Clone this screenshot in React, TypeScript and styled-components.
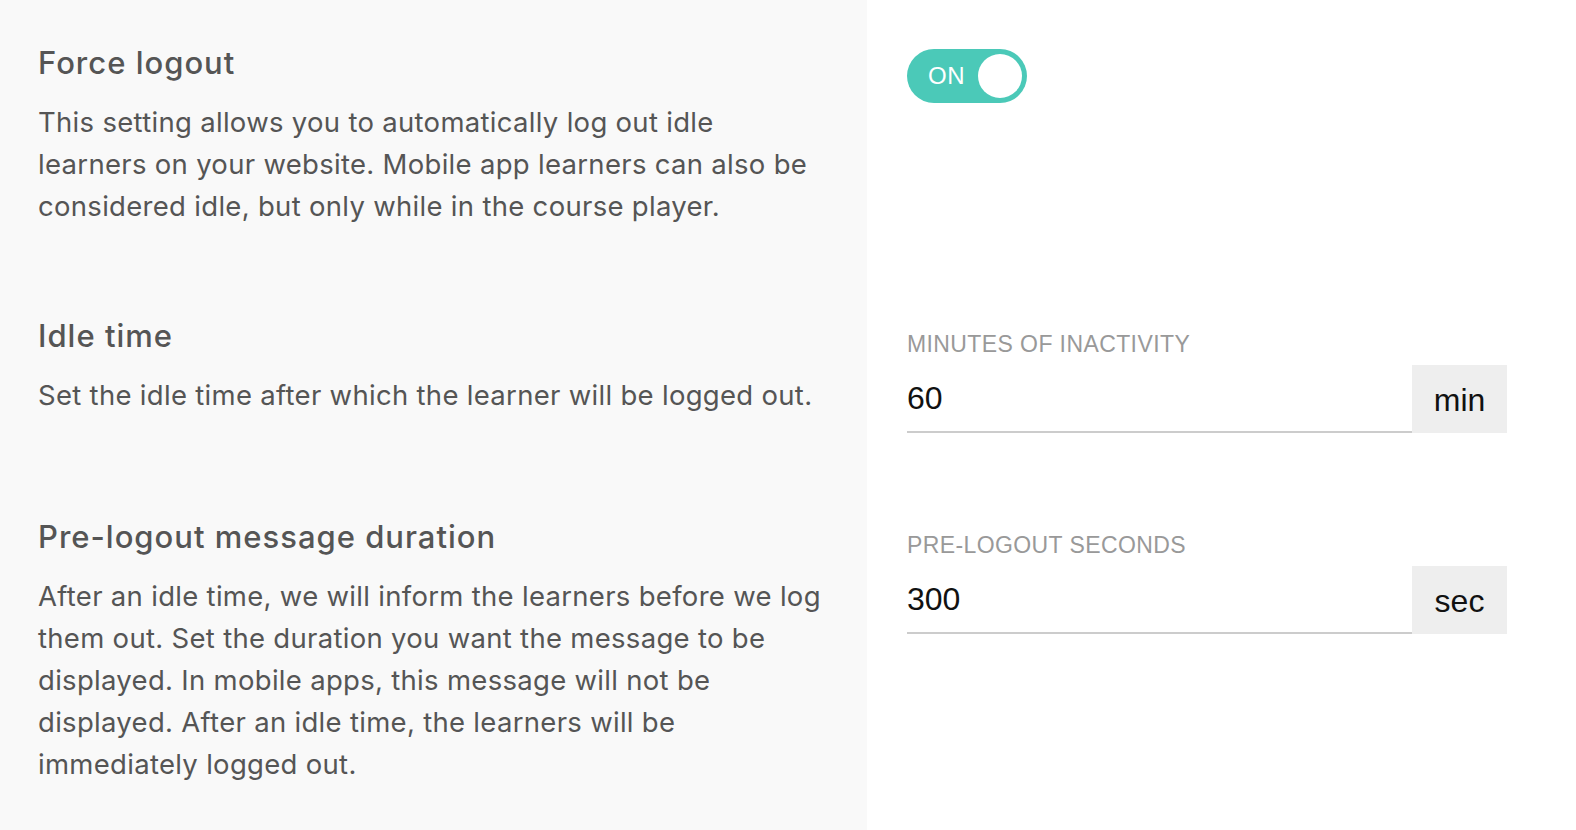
import styled, { createGlobalStyle } from 'styled-components'

const GlobalStyle = createGlobalStyle`
  html, body {
    margin: 0;
    padding: 0;
    background: #ffffff;
    font-family: "Liberation Sans", Arial, sans-serif;
  }
`

const Page = styled.div`
  display: grid;
  grid-template-columns: 867px 1fr;
  grid-template-rows: 273px 201px 1fr;
  min-height: 830px;
`

const InfoCell = styled.div`
  background-color: #f9f9f9;
  padding: 45px 40px 0 38px;
`

const ControlCell = styled.div<{ $top: number }>`
  padding: ${props => props.$top}px 69px 0 40px;
`

const Title = styled.h2`
  margin: 0 0 20px 0;
  font-family: Inter, "Liberation Sans", sans-serif;
  font-size: 31px;
  line-height: 36px;
  font-weight: 500;
  color: #555555;
  letter-spacing: 1px;
`

const Description = styled.p`
  margin: 0;
  font-family: Inter, "Liberation Sans", sans-serif;
  font-size: 27.5px;
  line-height: 42px;
  font-weight: 400;
  color: #555555;
  letter-spacing: 0.3px;
`

const Toggle = styled.button<{ $on: boolean }>`
  display: flex;
  align-items: center;
  justify-content: space-between;
  width: 120px;
  height: 54px;
  padding: 0 5px 0 21px;
  border: none;
  border-radius: 27px;
  background-color: ${props => (props.$on ? '#4bc9b8' : '#cccccc')};
  cursor: pointer;
`

const ToggleText = styled.span`
  color: #ffffff;
  font-family: "Liberation Sans", Arial, sans-serif;
  font-size: 24px;
  letter-spacing: 0.5px;
`

const Knob = styled.span`
  width: 44px;
  height: 44px;
  border-radius: 50%;
  background-color: #ffffff;
`

const FieldLabel = styled.label`
  display: block;
  margin-bottom: 8px;
  font-size: 23px;
  line-height: 26px;
  color: #999999;
  letter-spacing: 0.4px;
  text-transform: uppercase;
`

const InputRow = styled.div`
  display: flex;
  align-items: stretch;
  height: 68px;
`

const Input = styled.input`
  flex: 1;
  min-width: 0;
  padding: 0;
  border: none;
  border-bottom: 2px solid #cccccc;
  height: 66px;
  background: transparent;
  font-family: "Liberation Sans", Arial, sans-serif;
  font-size: 32px;
  color: #111111;
  outline: none;
`

const Suffix = styled.span`
  display: flex;
  align-items: center;
  justify-content: center;
  width: 95px;
  background-color: #eeeeee;
  font-size: 32px;
  color: #111111;
  padding-top: 2px;
`

const App = () => {
  return (
    <>
      <GlobalStyle />
      <Page>
        <InfoCell>
          <Title>Force logout</Title>
          <Description>
            This setting allows you to automatically log out idle learners on your website. Mobile app learners can also be considered idle, but only while in the course player.
          </Description>
        </InfoCell>
        <ControlCell $top={49}>
          <Toggle $on>
            <ToggleText>ON</ToggleText>
            <Knob />
          </Toggle>
        </ControlCell>

        <InfoCell>
          <Title>Idle time</Title>
          <Description>Set the idle time after which the learner will be logged out.</Description>
        </InfoCell>
        <ControlCell $top={58}>
          <FieldLabel htmlFor="idle-minutes">Minutes of inactivity</FieldLabel>
          <InputRow>
            <Input id="idle-minutes" defaultValue="60" />
            <Suffix>min</Suffix>
          </InputRow>
        </ControlCell>

        <InfoCell>
          <Title>Pre-logout message duration</Title>
          <Description>
            After an idle time, we will inform the learners before we log them out. Set the duration you want the message to be displayed. In mobile apps, this message will not be displayed. After an idle time, the learners will be immediately logged out.
          </Description>
        </InfoCell>
        <ControlCell $top={58}>
          <FieldLabel htmlFor="pre-logout-seconds">Pre-logout seconds</FieldLabel>
          <InputRow>
            <Input id="pre-logout-seconds" defaultValue="300" />
            <Suffix>sec</Suffix>
          </InputRow>
        </ControlCell>
      </Page>
    </>
  )
}

export default App
